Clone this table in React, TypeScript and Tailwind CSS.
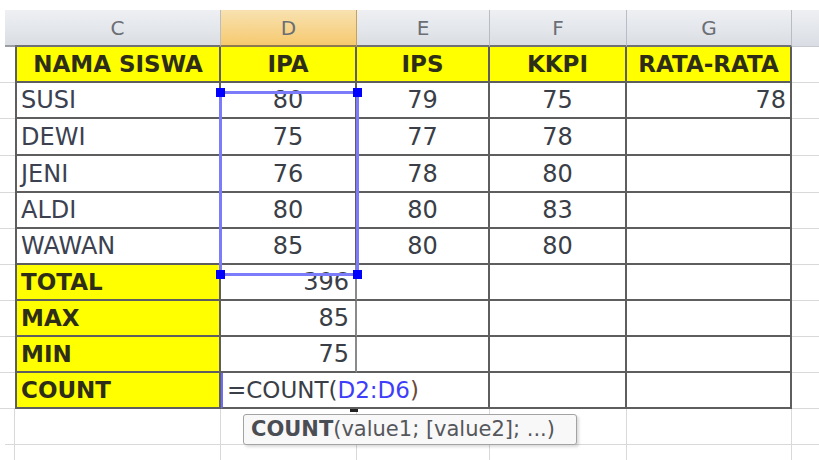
import type { ReactNode } from 'react';

const dark = 'border-[#5e5e5e]';

interface CellProps {
  children?: ReactNode;
  className?: string;
}

function Cell({ children, className = '' }: CellProps) {
  return (
    <div className={`flex items-center overflow-visible whitespace-nowrap px-[4px] ${className}`}>
      {children}
    </div>
  );
}

const letters = ['C', 'D', 'E', 'F', 'G'];
const heads = ['NAMA SISWA', 'IPA', 'IPS', 'KKPI', 'RATA-RATA'];

const students = [
  ['SUSI', '80', '79', '75', '78'],
  ['DEWI', '75', '77', '78', ''],
  ['JENI', '76', '78', '80', ''],
  ['ALDI', '80', '80', '83', ''],
  ['WAWAN', '85', '80', '80', ''],
];

const totals = [
  ['TOTAL', '396'],
  ['MAX', '85'],
  ['MIN', '75'],
];

const rowHeights = ['h-[36px]', 'h-[37px]', 'h-[37px]', 'h-[36px]', 'h-[36px]', 'h-[36px]'];

function Stub({ h }: { h: string }) {
  return <div className={`${h} col-span-2 border-b border-[#d9d9d9]`} />;
}

function Tail({ h }: { h: string }) {
  return <div className={`${h} border-b border-[#d9d9d9]`} />;
}

export default function App() {
  return (
    <div
      className="w-[819px] h-[460px] overflow-hidden bg-white pt-[10px]"
      style={{ fontFamily: '"DejaVu Sans", Verdana, sans-serif' }}
    >
      <div className="relative">
        <div className="grid grid-cols-[5px_10px_206px_136px_133px_137px_165px_27px] text-[#3a3e46]">
          {/* column letters */}
          <div className="h-[37px] bg-white" />
          <div className="h-[37px] bg-gradient-to-b from-[#eef0f3] to-[#dadee4] border-b-2 border-[#9a9da2]" />
          {letters.map((l) => (
            <div
              key={l}
              className={`h-[37px] flex items-center justify-center text-[20px] text-[#6b6e74] border-r border-b-2 ${
                l === 'D'
                  ? 'bg-gradient-to-b from-[#f8e2b0] to-[#f6c96e] border-r-[#c7a25a] border-b-[#8f7a4d]'
                  : 'bg-gradient-to-b from-[#eef0f3] to-[#dadee4] border-r-[#b9bdc3] border-b-[#6f7175]'
              }`}
            >
              {l}
            </div>
          ))}
          <div className="h-[37px] bg-gradient-to-b from-[#eef0f3] to-[#dadee4] border-b border-[#c6c9ce]" />

          {/* yellow headings */}
          <Stub h="h-[36px]" />
          {heads.map((t, i) => (
            <Cell
              key={t}
              className={`h-[36px] justify-center bg-[#ffff00] font-bold text-[23px] text-[#2e2e18] border-r-2 border-b-2 ${dark} ${
                i === 0 ? 'border-l-2' : ''
              }`}
            >
              {t}
            </Cell>
          ))}
          <Tail h="h-[36px]" />

          {/* student rows */}
          {students.map((r, ri) => {
            const h = rowHeights[ri];
            return [
              <Stub key={`s${ri}`} h={h} />,
              ...r.map((v, ci) => (
                <Cell
                  key={`${ri}-${ci}`}
                  className={`${h} text-[24px] border-r-2 border-b-2 ${dark} ${
                    ci === 0
                      ? 'border-l-2 text-[#3b4150]'
                      : ci === 4
                        ? 'justify-end'
                        : 'justify-center'
                  }`}
                >
                  {v}
                </Cell>
              )),
              <Tail key={`t${ri}`} h={h} />,
            ];
          })}

          {/* totals */}
          {totals.map(([label, val], ri) => [
            <Stub key={`ts${ri}`} h="h-[36px]" />,
            <Cell
              key={`tl${ri}`}
              className={`h-[36px] bg-[#ffff00] font-bold text-[23px] text-[#2e2e18] border-l-2 border-r-2 border-b-2 ${dark}`}
            >
              {label}
            </Cell>,
            <Cell
              key={`tv${ri}`}
              className={`h-[36px] justify-end pr-[6px] text-[24px] border-r-2 border-b-2 ${dark} border-r-[#8a8a8a]`}
            >
              {val}
            </Cell>,
            <Cell key={`te${ri}`} className={`h-[36px] border-r-2 border-b-2 ${dark}`} />,
            <Cell key={`tf${ri}`} className={`h-[36px] border-r-2 border-b-2 ${dark}`} />,
            <Cell key={`tg${ri}`} className={`h-[36px] border-r-2 border-b-2 ${dark}`} />,
            <Tail key={`tt${ri}`} h="h-[36px]" />,
          ])}

          {/* count row */}
          <Stub h="h-[36px]" />
          <Cell className={`h-[36px] bg-[#ffff00] font-bold text-[23px] text-[#2e2e18] border-l-2 border-r-2 border-b-2 ${dark}`}>
            COUNT
          </Cell>
          <Cell className={`h-[36px] col-span-2 border-b-2 border-r-2 ${dark} border-l-2 border-l-[#6b6bff] px-[4px] text-[23px]`}>
            <span className="text-[#3a3e46]">=COUNT(</span>
            <span className="text-[#3e3efa]">D2:D6</span>
            <span className="text-[#6b4a3a]">)</span>
          </Cell>
          <Cell className={`h-[36px] border-r-2 border-b-2 ${dark}`} />
          <Cell className={`h-[36px] border-r-2 border-b-2 ${dark}`} />
          <Tail h="h-[36px]" />

          {/* empty rows below */}
          {['h-[36px]', 'h-[20px]'].map((h, ri) => [
            <div key={`e0${ri}`} className={`${h}`} />,
            <div key={`e1${ri}`} className={`${h} border-r border-b border-[#d9d9d9]`} />,
            <div key={`e2${ri}`} className={`${h} border-r border-b border-[#d9d9d9]`} />,
            <div key={`e3${ri}`} className={`${h} border-r border-b border-[#d9d9d9]`} />,
            <div key={`e4${ri}`} className={`${h} border-r border-b border-[#d9d9d9]`} />,
            <div key={`e5${ri}`} className={`${h} border-r border-b border-[#d9d9d9]`} />,
            <div key={`e6${ri}`} className={`${h} border-r border-b border-[#d9d9d9]`} />,
            <div key={`e7${ri}`} className={`${h} border-b border-[#d9d9d9]`} />,
          ])}
        </div>

        {/* selection D2:D6 */}
        <div className="absolute left-[219px] top-[81px] w-[140px] h-[185px] border-[3px] border-[#7c7cfa] pointer-events-none">
          <div className="absolute -left-[6px] -top-[6px] w-[9px] h-[9px] bg-[#0000ff]" />
          <div className="absolute -right-[6px] -top-[6px] w-[9px] h-[9px] bg-[#0000ff]" />
          <div className="absolute -left-[6px] -bottom-[6px] w-[9px] h-[9px] bg-[#0000ff]" />
          <div className="absolute -right-[6px] -bottom-[6px] w-[9px] h-[9px] bg-[#0000ff]" />
        </div>

        {/* edit cursor tick */}
        <div className="absolute left-[350px] top-[399px] w-[8px] h-[3px] bg-[#222]" />

        {/* function tooltip */}
        <div className="absolute left-[243px] top-[404px] w-[334px] h-[31px] flex items-center whitespace-nowrap px-[7px] bg-[#f8f8f8] border border-[#a3a3a3] rounded-[3px] shadow-[2px_2px_3px_rgba(0,0,0,0.15)] text-[21px] leading-none text-[#55575c]">
          <span className="font-bold text-[#4a4d53]">COUNT</span>
          <span>(value1; [value2]; ...)</span>
        </div>
      </div>
    </div>
  );
}
